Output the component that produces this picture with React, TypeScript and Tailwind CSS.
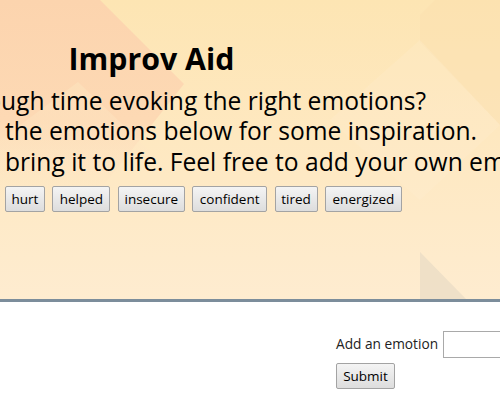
import React from "react";

const emotions: { label: string; w: string }[] = [
  { label: "hurt", w: "w-[40px]" },
  { label: "helped", w: "w-[58px]" },
  { label: "insecure", w: "w-[67px]" },
  { label: "confident", w: "w-[75px]" },
  { label: "tired", w: "w-[43px]" },
  { label: "energized", w: "w-[77px]" },
];

function Backdrop() {
  return (
    <svg
      className="pointer-events-none absolute inset-0"
      width="500"
      height="299"
      viewBox="0 0 500 299"
    >
      <defs>
        <linearGradient id="peach" x1="0" y1="0" x2="0" y2="1">
          <stop offset="0" stopColor="#fcd4ae" />
          <stop offset="0.6" stopColor="#fdd9b4" />
          <stop offset="1" stopColor="#fee6c6" stopOpacity="0" />
        </linearGradient>
        <linearGradient id="light" x1="0" y1="0" x2="0" y2="1">
          <stop offset="0" stopColor="#fde0ba" />
          <stop offset="1" stopColor="#fee8c8" stopOpacity="0" />
        </linearGradient>
      </defs>
      <polygon points="0,0 100,0 184,84 100,190 0,200" fill="url(#peach)" />
      <polygon points="78,82 170,170 0,180 0,140" fill="url(#light)" opacity="0.8" />
      <polygon points="420,15 435,0 500,0 500,125 420,42" fill="#f8dcab" opacity="0.35" />
      <polygon points="330,120 420,40 500,125 420,200" fill="#fff1d6" opacity="0.2" />
      <polygon points="420,252 466,299 420,299" fill="#e8dbc5" opacity="0.7" />
    </svg>
  );
}

export default function App() {
  return (
    <div
      className="w-[500px] h-[400px] overflow-hidden bg-white text-black"
      style={{ fontFamily: '"Open Sans", "Noto Sans", sans-serif' }}
    >
      <div className="relative h-[302px] overflow-hidden border-b-[3px] border-[#7c8d9b] bg-[linear-gradient(180deg,#fde5b3_0%,#fee8c0_45%,#feecd0_100%)]">
        <Backdrop />
        <div className="relative flex flex-col">
          <div className="mt-[41px] flex w-[303px] justify-center">
            <h1 className="whitespace-nowrap text-[30.3px] font-bold leading-[36px]">
              Improv Aid
            </h1>
          </div>
          <div className="mt-[9px] flex flex-col text-[24.6px] leading-[30.3px]">
            <p className="whitespace-nowrap pl-[1px]">
              <span className="inline-flex w-0 justify-end">Having a to</span>
              ugh time evoking the right emotions?
            </p>
            <p className="whitespace-nowrap pl-[5px]">
              <span className="inline-flex w-0 justify-end whitespace-pre">Click on one of </span>
              the emotions below for some inspiration.
            </p>
            <p className="whitespace-nowrap pl-[5px]">
              <span className="inline-flex w-0 justify-end whitespace-pre">Pick one and </span>
              bring it to life. Feel free to add your own emotions!
            </p>
          </div>
          <div className="mt-[9px] flex gap-x-[7.4px] pl-[5px]">
            {emotions.map((e) => (
              <button
                key={e.label}
                className={`${e.w} h-[26px] shrink-0 rounded-[2px] border border-[#a3a3a3] bg-linear-to-b from-[#f4f4f4] to-[#dddddd] text-center text-[13.5px] leading-[24px] text-black`}
              >
                {e.label}
              </button>
            ))}
          </div>
        </div>
      </div>
      <form
        className="ml-[336px] flex flex-col items-start gap-[5px] pt-[29px] text-[13.7px]"
        onSubmit={(ev) => ev.preventDefault()}
      >
        <div className="flex items-center gap-[5px] whitespace-nowrap">
          <label htmlFor="emotion" className="text-[#222]">Add an emotion</label>
          <input
            id="emotion"
            type="text"
            className="h-[27px] w-[170px] shrink-0 border border-[#a9a9a9] bg-white px-1"
          />
        </div>
        <button
          type="submit"
          className="h-[26px] w-[59px] rounded-[2px] border border-[#a3a3a3] bg-linear-to-b from-[#f4f4f4] to-[#dddddd] text-[13.5px] leading-[24px]"
        >
          Submit
        </button>
      </form>
    </div>
  );
}
